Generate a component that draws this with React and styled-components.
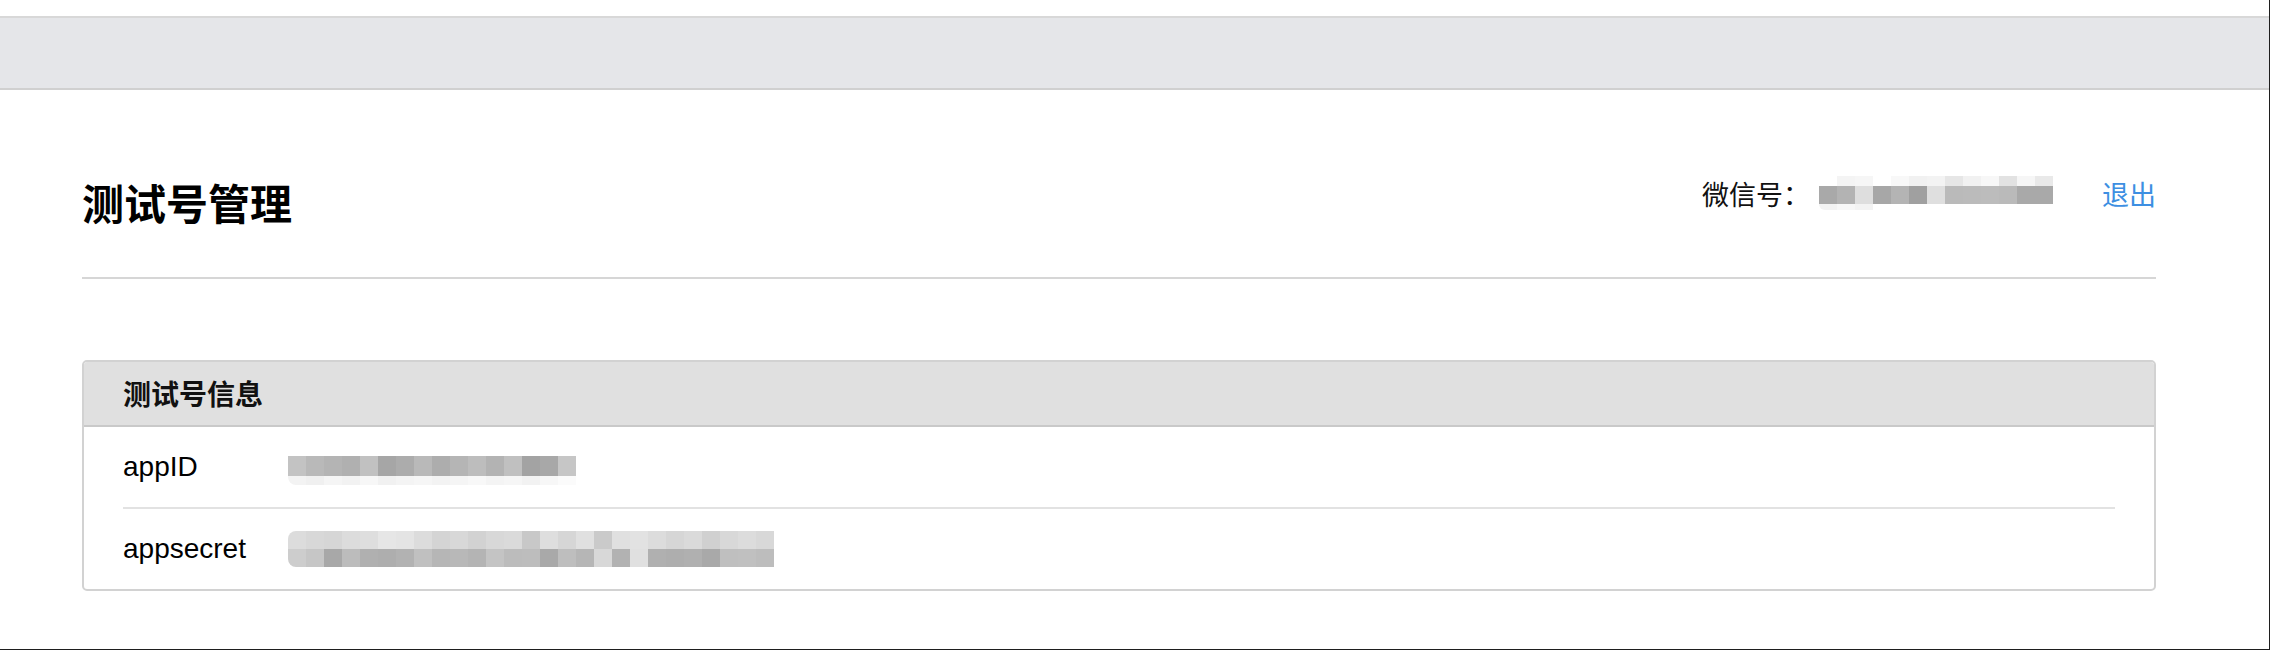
import React from 'react';
import styled, { createGlobalStyle } from 'styled-components';

const GlobalStyle = createGlobalStyle`
  html, body {
    margin: 0;
    padding: 0;
    background: #fff;
  }
  body {
    font-family: "Liberation Sans", "Noto Sans CJK SC", sans-serif;
    color: #000;
  }
`;

const Page = styled.div`
  height: 650px;
  box-sizing: border-box;
  padding-top: 16px;
  border-right: 1px solid #1e1e1e;
  border-bottom: 1px solid #1e1e1e;
  background: #fff;
  overflow: hidden;
`;

const TopBar = styled.div`
  height: 70px;
  background: #e5e6e9;
  border-top: 2px solid #d8d8d8;
  border-bottom: 2px solid #d0d0d0;
`;

const Main = styled.div`
  margin-left: 82px;
  width: 2074px;
`;

const Header = styled.div`
  display: flex;
  justify-content: space-between;
  align-items: flex-start;
  padding-top: 86px;
  padding-bottom: 54px;
  border-bottom: 2px solid #d6d6d6;
`;

const Title = styled.h1`
  margin: 5px 0 0 0;
  font-family: "Noto Sans CJK SC", sans-serif;
  font-size: 42px;
  line-height: 42px;
  font-weight: 700;
  color: #000;
`;

const Account = styled.div`
  display: flex;
  align-items: center;
  font-family: "Noto Sans CJK SC", sans-serif;
  font-size: 27px;
  line-height: 27px;
  color: #111;
`;

const Logout = styled.a`
  margin-left: 49px;
  color: #3d8fe2;
  text-decoration: none;
  cursor: pointer;
`;

const Panel = styled.section`
  margin-top: 81px;
  border: 2px solid #d2d2d2;
  border-radius: 5px;
  overflow: hidden;
`;

const PanelHeader = styled.div`
  height: 63px;
  padding-left: 39px;
  background: #e0e0e0;
  border-bottom: 2px solid #c9c9c9;
  font-family: "Noto Sans CJK SC", sans-serif;
  font-size: 28px;
  line-height: 63px;
  font-weight: 700;
  color: #111;
`;

const Row = styled.div`
  display: flex;
  align-items: center;
  height: 80px;
  margin: 0 39px;
  border-bottom: ${p => (p.$last ? 'none' : '2px solid #e2e2e2')};
`;

const Label = styled.div`
  width: 165px;
  font-size: 28px;
  color: #000;
`;

/* pixelated blur hiding the real values */
const Blur = styled.div`
  display: flex;
  flex-direction: column;
  margin-top: ${p => p.$top || 0}px;
  margin-left: ${p => p.$left || 0}px;
`;

const BlurRow = styled.div`
  display: flex;
  height: ${p => p.$h}px;
`;

const Cell = styled.div`
  width: 18px;
  height: 100%;
  background: ${p => p.$shade};
  border-top-left-radius: ${p => (p.$tl ? 8 : 0)}px;
  border-bottom-left-radius: ${p => (p.$bl ? 8 : 0)}px;
`;

const PixelBlur = ({ rows, top, left }) => (
  <Blur $top={top} $left={left}>
    {rows.map((row, ri) => (
      <BlurRow key={ri} $h={row.h}>
        {row.cells.map((c, ci) => (
          <Cell key={ci} $shade={c} $tl={ci === 0 && row.tl} $bl={ci === 0 && row.bl} />
        ))}
      </BlurRow>
    ))}
  </Blur>
);

const wechatBlur = [
  { h: 10, cells: ['#fff', '#f4f4f4', '#f6f6f6', '#fff', '#f8f8f8', '#f1f1f1', '#f3f3f3', '#e6e6e6', '#f1f1f1', '#f7f7f7', '#e2e2e2', '#f6f6f6', '#e9e9e9'] },
  { h: 18, cells: ['#a9a9a9', '#b3b3b3', '#dedede', '#a7a7a7', '#b4b4b4', '#a0a0a0', '#dfdfdf', '#bababa', '#bbbbbb', '#bcbcbc', '#bababa', '#a9a9a9', '#a9a9a9'] },
  { h: 6, bl: true, cells: ['#f2f2f2', '#f7f7f7', '#f3f3f3', '#fff', '#fff', '#fff', '#fff', '#fff', '#fff', '#fff', '#fff', '#fff', '#fff'] },
];

const appIdBlur = [
  { h: 20, cells: ['#c3c3c3', '#b9b9b9', '#b4b4b4', '#b0b0b0', '#c1c1c1', '#a6a6a6', '#acacac', '#b9b9b9', '#adadad', '#b5b5b5', '#bdbdbd', '#b3b3b3', '#c0c0c0', '#a3a3a3', '#a8a8a8', '#c6c6c6'] },
  { h: 9, bl: true, cells: ['#f3f3f3', '#f0f0f0', '#f5f5f5', '#f2f2f2', '#f7f7f7', '#f1f1f1', '#f4f4f4', '#f6f6f6', '#f3f3f3', '#f5f5f5', '#f8f8f8', '#f4f4f4', '#f6f6f6', '#f2f2f2', '#f7f7f7', '#fbfbfb'] },
];

const secretBlur = [
  { h: 18, tl: true, cells: ['#dcdcdc', '#d8d8d8', '#d6d6d6', '#dcdcdc', '#dedede', '#e6e6e6', '#e4e4e4', '#dcdcdc', '#d4d4d4', '#d8d8d8', '#d2d2d2', '#d8d8d8', '#dadada', '#c8c8c8', '#dedede', '#d6d6d6', '#e0e0e0', '#cacaca', '#e0e0e0', '#e2e2e2', '#dcdcdc', '#d6d6d6', '#dadada', '#d0d0d0', '#d8d8d8', '#dcdcdc', '#d8d8d8'] },
  { h: 18, bl: true, cells: ['#cdcdcd', '#c6c6c6', '#a8a8a8', '#bcbcbc', '#b0b0b0', '#aeaeae', '#b2b2b2', '#c0c0c0', '#b6b6b6', '#b8b8b8', '#b4b4b4', '#c4c4c4', '#bcbcbc', '#bdbdbd', '#a9a9a9', '#bebebe', '#b6b6b6', '#d8d8d8', '#b2b2b2', '#e0e0e0', '#b0b0b0', '#aeaeae', '#b0b0b0', '#a9a9a9', '#bfbfbf', '#c0c0c0', '#bdbdbd'] },
];

export default function App() {
  return (
    <>
      <GlobalStyle />
      <Page>
        <TopBar />
        <Main>
          <Header>
            <Title>测试号管理</Title>
            <Account>
              <span>微信号：</span>
              <PixelBlur rows={wechatBlur} left={9} />
              <Logout>退出</Logout>
            </Account>
          </Header>

          <Panel>
            <PanelHeader>测试号信息</PanelHeader>
            <Row>
              <Label>appID</Label>
              <PixelBlur rows={appIdBlur} top={7} />
            </Row>
            <Row $last>
              <Label>appsecret</Label>
              <PixelBlur rows={secretBlur} />
            </Row>
          </Panel>
        </Main>
      </Page>
    </>
  );
}
